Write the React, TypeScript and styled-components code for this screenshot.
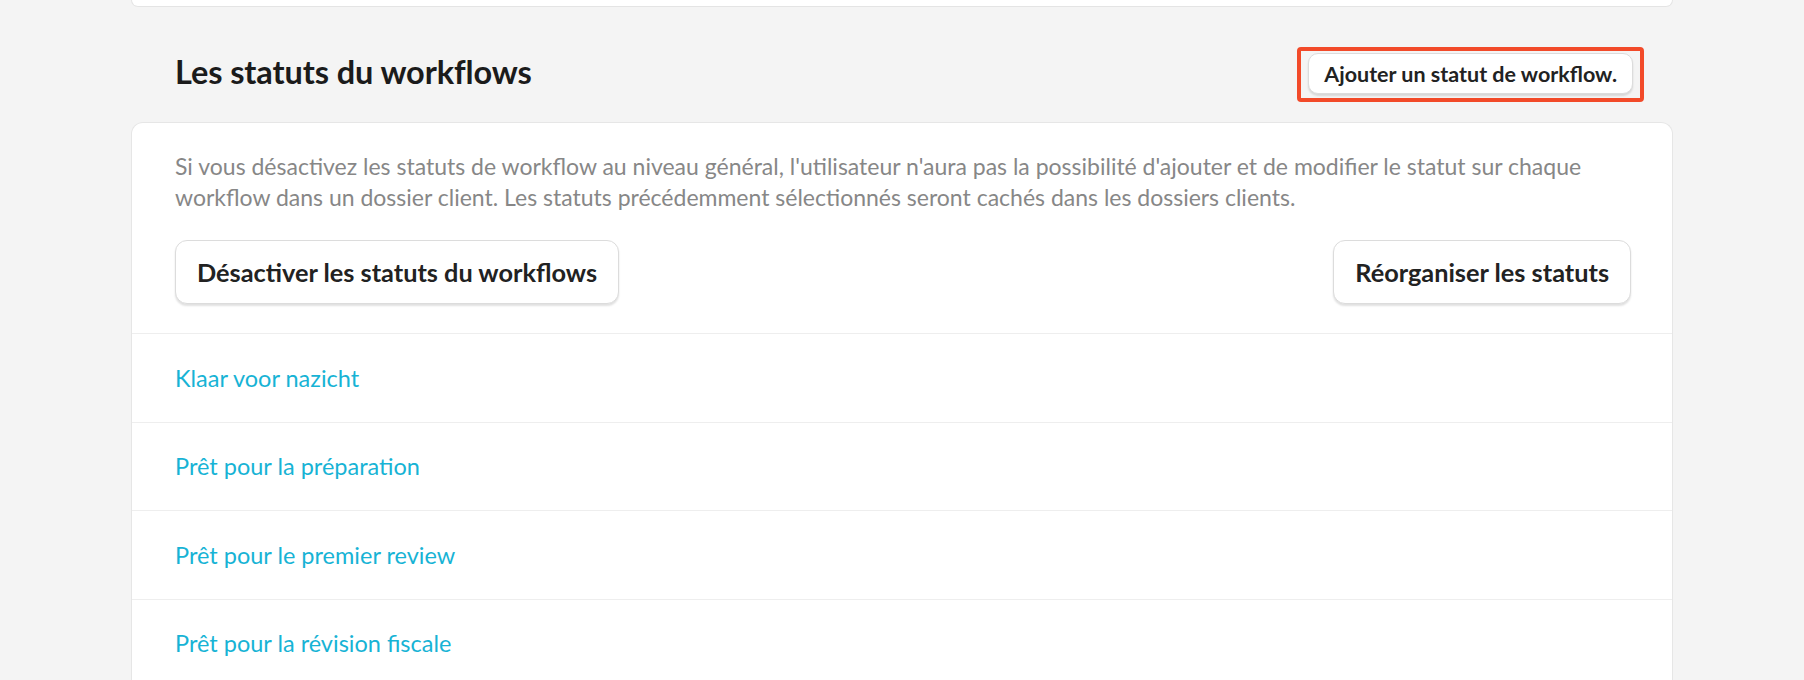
import React from "react";
import styled, { createGlobalStyle } from "styled-components";

const GlobalStyle = createGlobalStyle`
  html, body {
    margin: 0;
    padding: 0;
    background: #f4f4f4;
    font-family: Lato, "Open Sans", "Liberation Sans", sans-serif;
  }
  * { box-sizing: border-box; }
`;

const Page = styled.div`
  width: 1804px;
  height: 680px;
  overflow: hidden;
  background: #f4f4f4;
  padding: 0 131px;
  display: flex;
  flex-direction: column;
  & > * { flex-shrink: 0; }
`;

const TopCardEdge = styled.div`
  height: 7px;
  background: #fff;
  border: 1px solid #e4e4e4;
  border-top: none;
  border-radius: 0 0 12px 12px;
`;

const SectionHeader = styled.div`
  display: flex;
  align-items: center;
  justify-content: space-between;
  padding: 40px 29px 20px 44px;
`;

const Heading = styled.h2`
  margin: 0 0 6px 0;
  font-size: 32.5px;
  font-weight: 700;
  color: #1b1b1b;
  letter-spacing: -0.1px;
`;

const Highlight = styled.div`
  border: 4px solid #f24a29;
  border-radius: 4px;
  padding: 2px 7px 4px 7px;
  display: flex;
`;

type BtnProps = { $size: "sm" | "lg" };

const Button = styled.button<BtnProps>`
  font-family: Lato, "Open Sans", "Liberation Sans", sans-serif;
  font-weight: 700;
  color: #222;
  background: #fff;
  border: 1px solid #dcdcdc;
  box-shadow: 0 2px 2px rgba(0, 0, 0, 0.12);
  cursor: pointer;
  white-space: nowrap;
  font-size: ${(p) => (p.$size === "sm" ? "21.5px" : "25.3px")};
  height: ${(p) => (p.$size === "sm" ? "41px" : "64px")};
  padding: ${(p) => (p.$size === "sm" ? "0 15px" : "0 21px")};
  border-radius: ${(p) => (p.$size === "sm" ? "10px" : "12px")};
`;

const Card = styled.div`
  flex: 1 0 auto;
  background: #fff;
  border: 1px solid #e6e6e6;
  border-bottom: none;
  border-radius: 12px 12px 0 0;
  display: flex;
  flex-direction: column;
`;

const Intro = styled.div`
  padding: 28px 41px 29px 43px;
  display: flex;
  flex-direction: column;
  gap: 27px;
`;

const Description = styled.p`
  margin: 0;
  font-size: 23px;
  line-height: 31px;
  color: #878787;
`;

const ButtonRow = styled.div`
  display: flex;
  justify-content: space-between;
  align-items: center;
`;

const StatusList = styled.ul`
  list-style: none;
  margin: 0;
  padding: 0;
`;

const StatusRow = styled.li`
  height: 88.5px;
  border-top: 1px solid #eeeeee;
  display: flex;
  align-items: center;
  padding-left: 43px;
`;

const StatusLink = styled.a`
  font-size: 23.5px;
  color: #17b3d5;
  text-decoration: none;
  cursor: pointer;
`;

const statuses = [
  "Klaar voor nazicht",
  "Prêt pour la préparation",
  "Prêt pour le premier review",
  "Prêt pour la révision fiscale",
];

export default function App() {
  return (
    <>
      <GlobalStyle />
      <Page>
        <TopCardEdge />
        <SectionHeader>
          <Heading>Les statuts du workflows</Heading>
          <Highlight>
            <Button $size="sm">Ajouter un statut de workflow.</Button>
          </Highlight>
        </SectionHeader>
        <Card>
          <Intro>
            <Description>
              Si vous désactivez les statuts de workflow au niveau général, l'utilisateur n'aura pas la
              possibilité d'ajouter et de modifier le statut sur chaque workflow dans un dossier client. Les
              statuts précédemment sélectionnés seront cachés dans les dossiers clients.
            </Description>
            <ButtonRow>
              <Button $size="lg">Désactiver les statuts du workflows</Button>
              <Button $size="lg">Réorganiser les statuts</Button>
            </ButtonRow>
          </Intro>
          <StatusList>
            {statuses.map((s) => (
              <StatusRow key={s}>
                <StatusLink>{s}</StatusLink>
              </StatusRow>
            ))}
          </StatusList>
        </Card>
      </Page>
    </>
  );
}
